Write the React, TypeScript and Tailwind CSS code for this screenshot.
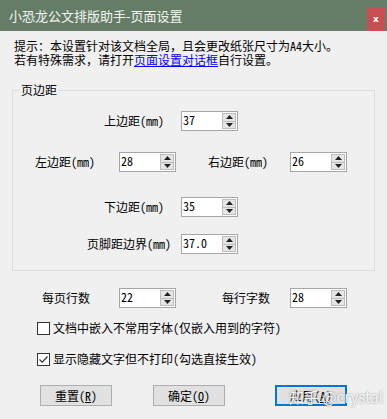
import React from "react";

const MONO = "font-['Noto_Sans_Mono_CJK_SC','Noto_Sans_CJK_SC',monospace]";

function Spin({ value }: { value: string }) {
  return (
    <div className="relative w-[57px] h-[20px] bg-white border border-[#a6a6a6] shrink-0">
      <div className="pl-[1px] pt-[1px] text-[12px] leading-[14px] text-black">{value}</div>
      <div className="absolute right-[1px] top-[1px] bottom-[1px] w-[14px] flex flex-col border border-[#bdbdbd] bg-[#e5e5e5]">
        <div className="flex-1 flex items-center justify-center border-b border-[#bdbdbd]">
          <svg width="7" height="4" viewBox="0 0 7 4"><path d="M3.5 0 L7 4 L0 4 Z" fill="#222" /></svg>
        </div>
        <div className="flex-1 flex items-center justify-center">
          <svg width="7" height="4" viewBox="0 0 7 4"><path d="M0 0 L7 0 L3.5 4 Z" fill="#222" /></svg>
        </div>
      </div>
    </div>
  );
}

function Btn({ label, k, primary }: { label: string; k: string; primary?: boolean }) {
  return (
    <div
      className={
        "w-[72px] h-[21px] flex items-center justify-center bg-[#e1e1e1] text-[12px] leading-[14px] text-black " +
        (primary ? "border-2 border-[#0078d7]" : "border border-[#adadad]")
      }
    >
      <span>
        {label}(<span className="underline">{k}</span>)
      </span>
    </div>
  );
}

export default function App() {
  return (
    <div className={"relative w-[387px] h-[419px] bg-[#f0f0f0] overflow-hidden text-black " + MONO}>
      {/* Title bar */}
      <div className="h-[31px] bg-[#657d66] flex items-start justify-between">
        <div className="pl-[9px] pt-[7px] text-[13px] leading-[17px] text-[#f2f5f2] font-['Noto_Sans_CJK_SC',sans-serif]">
          小恐龙公文排版助手-页面设置
        </div>
        <div className="mt-[8px] mr-[2px] w-[18px] h-[23px] bg-[#c94e51] flex items-center justify-center">
          <span className="text-white text-[9px] font-bold leading-none font-['DejaVu_Sans',sans-serif]">x</span>
        </div>
      </div>

      {/* Hint */}
      <div className="pl-[14px] pt-[8px] text-[12px] leading-[14px]">
        <div>提示：本设置针对该文档全局，且会更改纸张尺寸为A4大小。</div>
        <div>
          若有特殊需求，请打开<span className="text-[#0000ff] underline">页面设置对话框</span>自行设置。
        </div>
      </div>

      {/* Group box */}
      <fieldset className="ml-[12px] mt-[16px] w-[363px] border border-[#dcdcdc] p-0 m-0 pb-[16px] min-w-0">
        <legend className="ml-[7px] px-[1px] text-[12px] leading-[14px]">页边距</legend>
        <div className="flex items-center mt-[14px] ml-[91px] text-[12px] leading-[14px]">
          <div className="w-[77px]">上边距(mm)</div>
          <Spin value="37" />
        </div>
        <div className="flex items-center mt-[21px] ml-[22px] text-[12px] leading-[14px]">
          <div className="w-[84px]">左边距(mm)</div>
          <Spin value="28" />
          <div className="ml-[32px] w-[82px]">右边距(mm)</div>
          <Spin value="26" />
        </div>
        <div className="flex items-center mt-[25px] ml-[91px] text-[12px] leading-[14px]">
          <div className="w-[77px]">下边距(mm)</div>
          <Spin value="35" />
        </div>
        <div className="flex items-center mt-[17px] ml-[74px] text-[12px] leading-[14px]">
          <div className="w-[94px]">页脚距边界(mm)</div>
          <Spin value="37.0" />
        </div>
      </fieldset>

      {/* Lines & chars */}
      <div className="flex items-center mt-[17px] ml-[42px] text-[12px] leading-[14px]">
        <div className="w-[77px]">每页行数</div>
        <Spin value="22" />
        <div className="ml-[46px] w-[68px]">每行字数</div>
        <Spin value="28" />
      </div>

      {/* Checkboxes */}
      <div className="flex items-center mt-[13px] ml-[37px] text-[12px] leading-[14px]">
        <div className="w-[13px] h-[13px] border border-[#333] bg-white shrink-0" />
        <div className="ml-[3px]">文档中嵌入不常用字体(仅嵌入用到的字符)</div>
      </div>
      <div className="flex items-center mt-[17px] ml-[37px] text-[12px] leading-[14px]">
        <div className="w-[13px] h-[13px] border border-[#333] bg-white shrink-0 flex items-center justify-center">
          <svg width="11" height="11" viewBox="0 0 11 11">
            <path d="M1.5 5.5 L4.2 8.2 L9.5 2.5" fill="none" stroke="#333" strokeWidth="1.2" />
          </svg>
        </div>
        <div className="ml-[3px]">显示隐藏文字但不打印(勾选直接生效)</div>
      </div>

      {/* Buttons */}
      <div className="flex mt-[19px] ml-[40px]">
        <Btn label="重置" k="R" />
        <div className="ml-[41px]">
          <Btn label="确定" k="O" />
        </div>
        <div className="ml-[50px]">
          <Btn label="应用" k="A" primary />
        </div>
      </div>

      {/* Watermark */}
      <div className="absolute left-[289px] top-[388px] text-[15px] leading-[18px] text-white/90 font-['Noto_Sans_CJK_SC',sans-serif] [text-shadow:0_0_2px_#7a7a7a]">
        知乎 @crystal
      </div>
    </div>
  );
}
